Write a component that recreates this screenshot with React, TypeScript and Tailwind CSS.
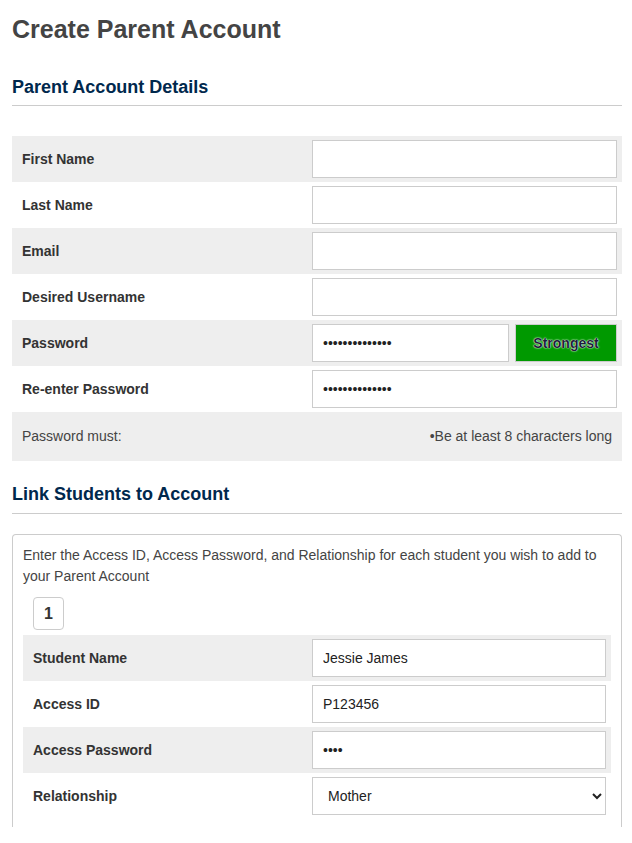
import React from "react";

function Row({
  label,
  shaded,
  labelW = "w-[300px]",
  children,
}: {
  label: string;
  shaded?: boolean;
  labelW?: string;
  children: React.ReactNode;
}) {
  return (
    <div className={`flex h-[46px] items-center ${shaded ? "bg-[#eeeeee]" : "bg-white"}`}>
      <div className={`${labelW} shrink-0 pl-[10px] text-[14px] font-bold text-[#333]`}>{label}</div>
      <div className="flex flex-1 items-center pr-[5px]">{children}</div>
    </div>
  );
}

const inputCls =
  "h-[38px] w-full border border-[#cccccc] bg-white px-[10px] text-[14px] text-[#222] outline-none";

export default function App() {
  return (
    <div className="min-h-screen bg-white px-[12px] pt-[15px] font-['Liberation_Sans',Arial,sans-serif] text-[#444]">
      <h1 className="text-[25px] font-bold leading-[29px] text-[#444]">Create Parent Account</h1>

      <h2 className="mt-[32px] text-[18px] font-bold leading-[22px] text-[#00284d]">Parent Account Details</h2>
      <div className="mt-[7px] w-[610px] border-b border-[#cccccc]" />

      {/* parent details */}
      <div className="mt-[30px] w-[610px]">
        <Row label="First Name" shaded>
          <input className={inputCls} />
        </Row>
        <Row label="Last Name">
          <input className={inputCls} />
        </Row>
        <Row label="Email" shaded>
          <input className={inputCls} />
        </Row>
        <Row label="Desired Username">
          <input className={inputCls} />
        </Row>
        <Row label="Password" shaded>
          <div className="flex w-full gap-[6px]">
            <input type="password" defaultValue="abcdefghijklmn" className={`${inputCls} !w-[197px]`} />
            <div className="flex h-[38px] flex-1 items-center justify-center border border-[#cccccc] bg-[#009900] text-[14px] font-bold text-[#1e1e3a] [text-shadow:0_0_2px_#fff,0_0_1px_#fff]">
              Strongest
            </div>
          </div>
        </Row>
        <Row label="Re-enter Password">
          <input type="password" defaultValue="abcdefghijklmn" className={inputCls} />
        </Row>
        <div className="flex h-[49px] items-center justify-between bg-[#eeeeee] px-[10px] text-[14px] text-[#444]">
          <span>Password must:</span>
          <span>•Be at least 8 characters long</span>
        </div>
      </div>

      <h2 className="mt-[22px] text-[18px] font-bold leading-[22px] text-[#00284d]">Link Students to Account</h2>
      <div className="mt-[8px] w-[610px] border-b border-[#cccccc]" />

      {/* students */}
      <div className="mt-[20px] w-[610px] rounded-t-[4px] border-x border-t border-[#cccccc] px-[10px] pt-[10px] pb-[8px]">
        <p className="text-[14px] leading-[21px] text-[#444]">
          Enter the Access ID, Access Password, and Relationship for each student you wish to add to your Parent Account
        </p>
        <div className="ml-[10px] mt-[10px] flex h-[33px] w-[31px] items-center justify-center rounded-[4px] border border-[#cccccc] text-[16px] font-bold text-[#333]">
          1
        </div>
        <div className="mt-[5px]">
          <Row label="Student Name" shaded labelW="w-[289px]">
            <input defaultValue="Jessie James" className={inputCls} />
          </Row>
          <Row label="Access ID" labelW="w-[289px]">
            <input defaultValue="P123456" className={inputCls} />
          </Row>
          <Row label="Access Password" shaded labelW="w-[289px]">
            <input type="password" defaultValue="abcd" className={inputCls} />
          </Row>
          <Row label="Relationship" labelW="w-[289px]">
            <select defaultValue="Mother" className={`${inputCls} pl-[11px]`}>
              <option>Mother</option>
              <option>Father</option>
              <option>Guardian</option>
            </select>
          </Row>
        </div>
      </div>
    </div>
  );
}
